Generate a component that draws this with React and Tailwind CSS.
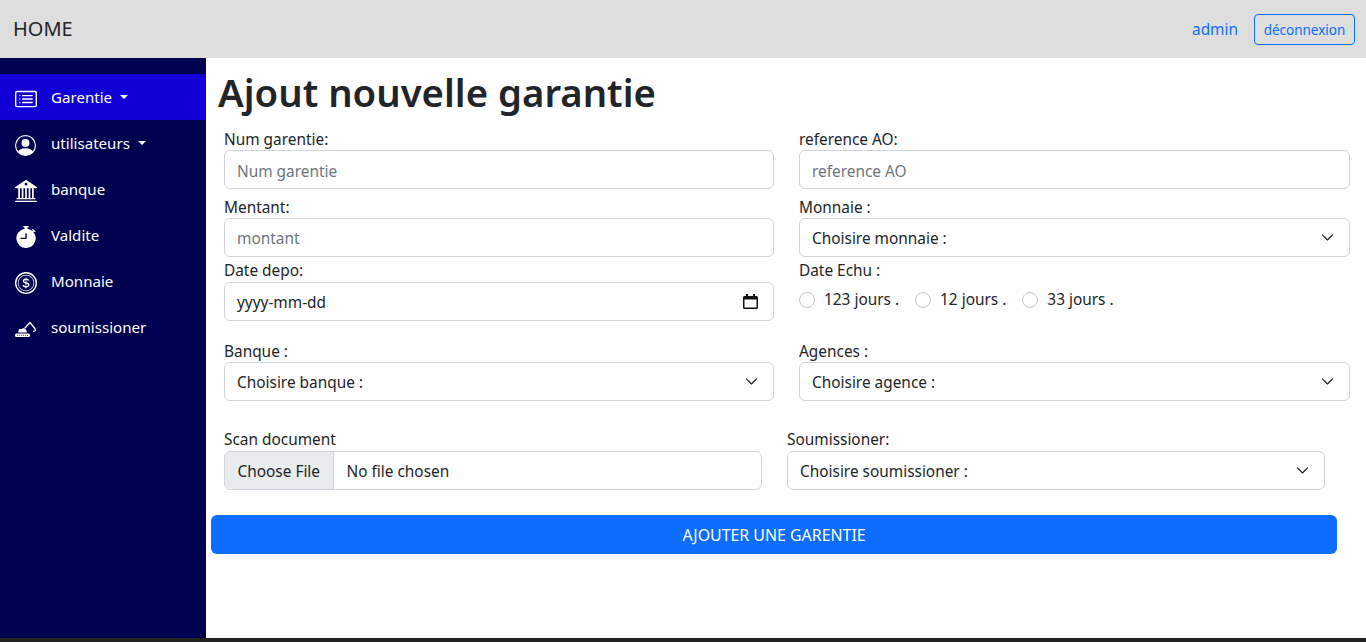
import React from "react";
import { BsCardList, BsPersonCircle, BsBank2, BsStopwatchFill, BsCoin, BsChevronDown } from "react-icons/bs";

function ExcavatorIcon() {
    return (
        <svg width="22" height="17" viewBox="0 0 22 17" fill="none">
            <path d="M3 11.5l1-3.5h3l1-1 3 1.5 1 3z" fill="white" />
            <path d="M9.5 7.5l5.5-6 4.5 5.5" stroke="white" strokeWidth="1.3" />
            <path d="M19.5 6.5l1 3-2.5 1" stroke="white" strokeWidth="1.3" />
            <rect x="0" y="12.5" width="15" height="3.5" rx="1.5" fill="white" />
            <path d="M2 14.3h11" stroke="#000050" strokeWidth="0.8" strokeDasharray="1 1" />
        </svg>
    );
}

function CalendarIcon() {
    return (
        <svg width="15" height="15" viewBox="0 0 15 15" className="mb-px">
            <path d="M3 0h2v2h5V0h2v2h1.5A1.5 1.5 0 0 1 15 3.5v10a1.5 1.5 0 0 1-1.5 1.5h-12A1.5 1.5 0 0 1 0 13.5v-10A1.5 1.5 0 0 1 1.5 2H3zM1.5 5.5v8h12v-8z" fill="#111" fillRule="evenodd" />
        </svg>
    );
}

const menu = [
    { label: "Garentie", icon: <BsCardList size={22} />, caret: true, active: true },
    { label: "utilisateurs", icon: <BsPersonCircle size={21} />, caret: true },
    { label: "banque", icon: <BsBank2 size={22} /> },
    { label: "Valdite", icon: <BsStopwatchFill size={22} /> },
    { label: "Monnaie", icon: <BsCoin size={22} /> },
    { label: "soumissioner", icon: <ExcavatorIcon /> },
];

function SideItem({ item }) {
    return (
        <a href="#" className={`flex h-[46px] items-center pl-[15px] text-[15.1px] text-white ${item.active ? "bg-[#1100d6]" : ""}`}>
            <span className="mt-1 flex w-[36px] shrink-0">{item.icon}</span>
            <span className="pt-px">{item.label}</span>
            {item.caret && <span className="ml-[8px] h-0 w-0 border-x-[4.8px] border-t-[4.8px] border-x-transparent border-t-white"></span>}
        </a>
    );
}

function Field({ label, children, className = "flex-1", labelClass = "leading-[24px]" }) {
    return (
        <div className={className}>
            <label className={`block h-[22px] ${labelClass}`}>{label}</label>
            {children}
        </div>
    );
}

function TextInput({ placeholder, className = "" }) {
    return (
        <input
            placeholder={placeholder}
            className={`block h-[39px] w-full rounded-md border border-[#ced4da] bg-white px-3 outline-none placeholder:text-[#6c757d] ${className}`}
        />
    );
}

function SelectBox({ text }) {
    return (
        <div className="flex h-[39px] w-full items-center justify-between rounded-md border border-[#ced4da] bg-white pl-3 pr-[15px]">
            <span className="pt-[3px]">{text}</span>
            <BsChevronDown size={13} strokeWidth={0.8} />
        </div>
    );
}

function Radio({ label }) {
    return (
        <label className="flex items-center gap-[9px]">
            <input type="radio" name="echu" className="h-4 w-4 appearance-none rounded-full border border-[#bfc4c9] bg-white" />
            <span>{label}</span>
        </label>
    );
}

export default function App() {
    return (
        <div className="flex h-[642px] flex-col overflow-hidden bg-white font-['Noto_Sans',sans-serif] text-[15.4px] text-[#212529]">
            <header className="flex h-[58px] shrink-0 items-center justify-between bg-[#dedede] pl-[13px] pr-[11px]">
                <span className="text-[20px]">HOME</span>
                <div className="flex items-center gap-4">
                    <a href="#" className="pt-[2px] text-[#0d6efd]">admin</a>
                    <button className="h-[31px] w-[101px] rounded border border-[#0d6efd] pt-[3px] text-[13.5px] text-[#0d6efd]">déconnexion</button>
                </div>
            </header>

            <div className="flex flex-1">
                <aside className="w-[206px] shrink-0 bg-[#000050] pt-4">
                    {menu.map((item) => (
                        <SideItem key={item.label} item={item} />
                    ))}
                </aside>

                <main className="flex-1 pl-[5px] pt-[10px]">
                    <h1 className="ml-[7px] mb-[12px] text-[38.3px] font-semibold leading-[48px]">Ajout nouvelle garantie</h1>

                    <div className="ml-[13px] w-[1126px]">
                        <div className="flex gap-[25px]">
                            <Field label="Num garentie:" className="w-[550px]"><TextInput placeholder="Num garentie" className="pt-[3px]" /></Field>
                            <Field label="reference AO:"><TextInput placeholder="reference AO" className="pt-[3px]" /></Field>
                        </div>
                        <div className="mt-[7px] flex gap-[25px]">
                            <Field label="Mentant:" className="w-[550px]"><TextInput placeholder="montant" className="pt-px" /></Field>
                            <Field label="Monnaie :"><SelectBox text="Choisire monnaie :" /></Field>
                        </div>
                        <div className="mt-[3px] flex gap-[25px]">
                            <Field label="Date depo:" className="w-[550px]" labelClass="leading-[22px]">
                                <div className="flex h-[39px] items-center justify-between rounded-md border border-[#ced4da] bg-white pl-3 pr-[15px]">
                                    <span className="pt-[3px]">yyyy-mm-dd</span>
                                    <CalendarIcon />
                                </div>
                            </Field>
                            <Field label="Date Echu :" labelClass="leading-[22px]">
                                <div className="mt-[6px] flex gap-4">
                                    <Radio label="123 jours ." />
                                    <Radio label="12 jours ." />
                                    <Radio label="33 jours ." />
                                </div>
                            </Field>
                        </div>
                        <div className="mt-[19px] flex gap-[25px]">
                            <Field label="Banque :" className="w-[550px]"><SelectBox text="Choisire banque :" /></Field>
                            <Field label="Agences :"><SelectBox text="Choisire agence :" /></Field>
                        </div>
                        <div className="mt-[28px] flex gap-[25px]">
                            <Field label="Scan document" className="w-[538px]" labelClass="leading-[22px]">
                                <input
                                    type="file"
                                    className="block h-[39px] w-full rounded-md border border-[#ced4da] bg-white pr-3 file:mr-[13px] file:h-full file:border-0 file:border-r file:border-solid file:border-[#ced4da] file:bg-[#e9ecef] file:px-[12.5px] file:pt-[2px] file:text-[#212529]"
                                />
                            </Field>
                            <Field label="Soumissioner:" className="w-[538px]" labelClass="leading-[22px]"><SelectBox text="Choisire soumissioner :" /></Field>
                        </div>
                    </div>

                    <button className="mt-[25px] h-[39px] w-[1126px] rounded-md bg-[#0d6efd] pt-[3px] text-[15.9px] text-white">AJOUTER UNE GARENTIE</button>
                </main>
            </div>

            <div className="h-1 shrink-0 bg-[#20261f]"></div>
        </div>
    );
}
